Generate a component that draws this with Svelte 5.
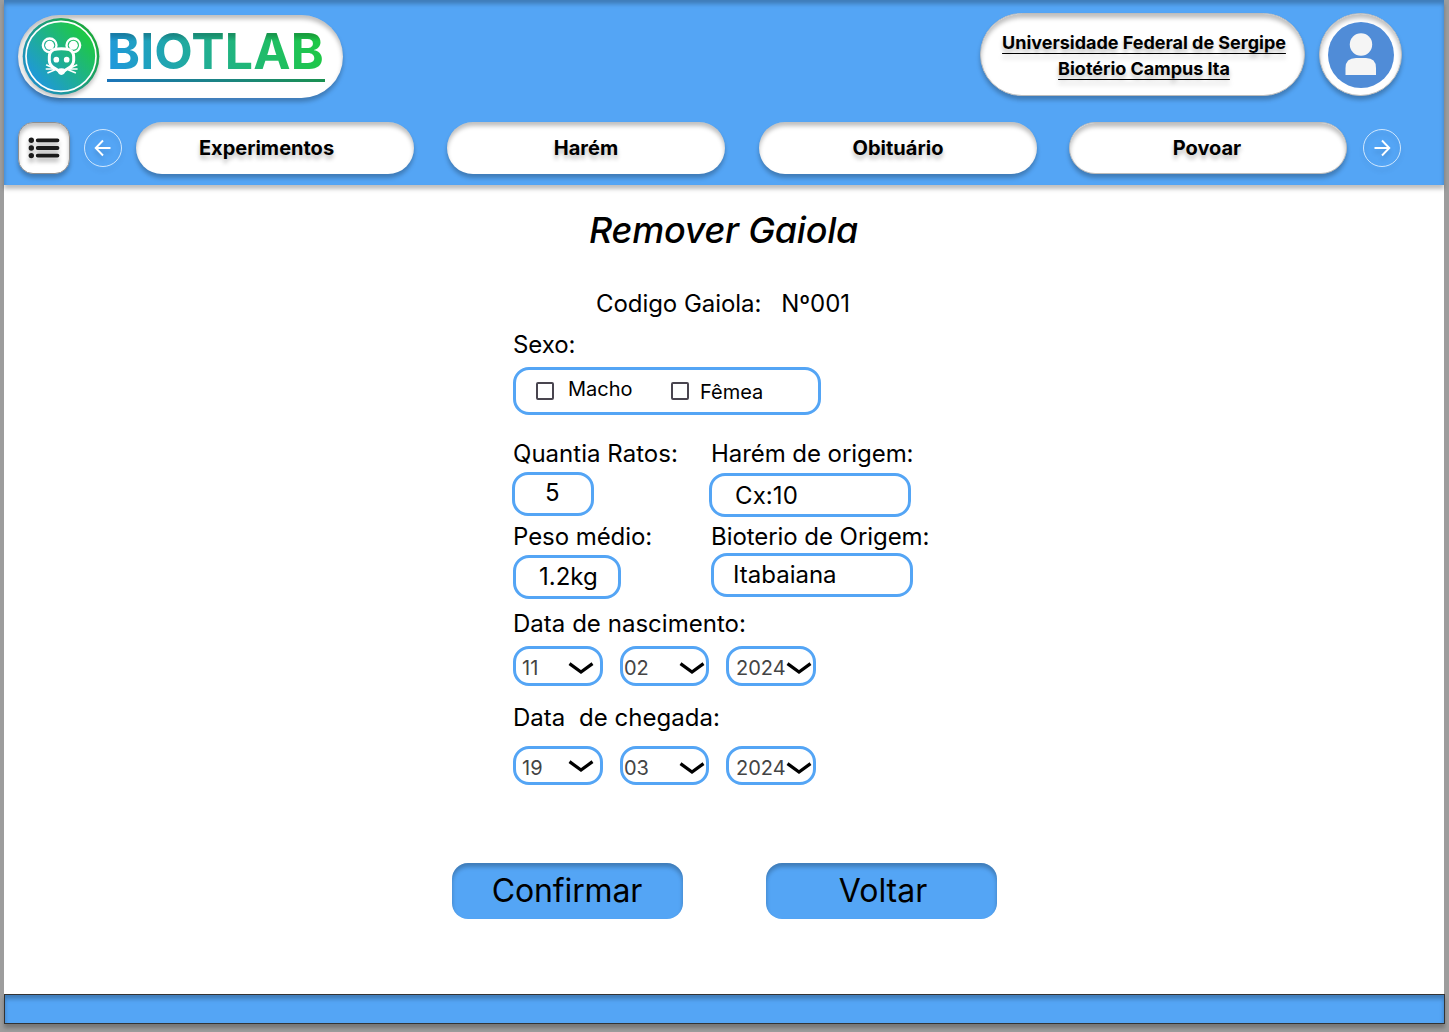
<script>
  const tabs = ['Experimentos', 'Harém', 'Obituário', 'Povoar'];
  const dates = [
    { key: 'birth', label: 'Data de nascimento:', parts: ['11', '02', '2024'] },
    { key: 'arrival', label: 'Data  de chegada:', parts: ['19', '03', '2024'] }
  ];
</script>

<div class="frame">
  <header>
    <div class="top">
      <div class="brand">
        <svg class="logo" width="78" height="78" viewBox="65 51 234 234">
          <defs>
            <linearGradient id="lg" gradientUnits="userSpaceOnUse" x1="100" y1="240" x2="255" y2="105">
              <stop offset="0" stop-color="#1f97dc" />
              <stop offset="1" stop-color="#1ec846" />
            </linearGradient>
            <linearGradient id="ring" x1="0" y1="0.8" x2="0.9" y2="0.2">
              <stop offset="0" stop-color="#1f8fd0" />
              <stop offset="1" stop-color="#1ba83c" />
            </linearGradient>
          </defs>
          <circle cx="182" cy="169" r="115" fill="url(#ring)" />
          <circle cx="182" cy="169" r="105" fill="url(#lg)" stroke="#fff" stroke-width="5" />
          <g fill="url(#lg)" stroke="#fff" stroke-width="7" stroke-linejoin="round">
            <circle cx="148" cy="136" r="20.500" />
            <circle cx="219" cy="136" r="20.500" />
            <path d="M160 149 Q183 143 207 149 Q220 155 220 170 V182 Q219 197 205 204 L192 212 H175 L162 204 Q148 197 147 182 V170 Q147 155 160 149Z" stroke-width="9" />
          </g>
          <path d="M139 195 L157 203 M138 207 L159 207 M143 218 L163 210 M229 195 L211 203 M230 207 L209 207 M225 218 L205 210" fill="none" stroke="#fff" stroke-width="5" stroke-linecap="round" />
          <g fill="#fff">
            <circle cx="148" cy="136" r="13.500" /><circle cx="219" cy="136" r="13.500" />
            <circle cx="168" cy="179" r="8.500" /><circle cx="199" cy="179" r="8.500" />
            <path d="M170 209 Q183 201 197 209 Q194 223 183 225 Q173 223 170 209Z" />
          </g>
        </svg>
        <span class="word">BIOTLAB</span>
      </div>
      <div class="account">
        <div class="campus"><span>Universidade Federal de Sergipe</span><span>Biotério Campus Ita</span></div>
        <div class="avatar">
          <svg width="66" height="66" viewBox="0 0 66 66">
            <circle cx="33" cy="33" r="33" fill="#508cd7" />
            <circle cx="33" cy="22.500" r="11.200" fill="#f5f5f5" />
            <path d="M17.500 53V46Q17.500 36 28 36H38Q48 36 48 46V53Z" fill="#f5f5f5" />
          </svg>
        </div>
      </div>
    </div>
    <nav>
      <button class="menu" aria-label="Menu">
        <svg width="32" height="22" viewBox="0 0 32 22">
          <g fill="#1a1a1a"><circle cx="3.300" cy="3.300" r="2.700" /><circle cx="3.300" cy="11" r="2.700" /><circle cx="3.300" cy="18.600" r="2.700" /></g>
          <path d="M9.700 3.300H29.500M9.700 11H29.500M9.700 18.600H29.500" stroke="#1a1a1a" stroke-width="3.800" stroke-linecap="round" />
        </svg>
      </button>
      <button class="arrow" aria-label="Anterior">
        <svg width="38" height="38" viewBox="0 0 38 38"><path d="M26.500 19H12M19 11.500L11.700 19L19 26.500" /></svg>
      </button>
      <div class="tabs">
        {#each tabs as tab}<button class="tab">{tab}</button>{/each}
      </div>
      <button class="arrow" aria-label="Próximo">
        <svg width="38" height="38" viewBox="0 0 38 38"><path d="M11.500 19H26M19 11.500L26.300 19L19 26.500" /></svg>
      </button>
    </nav>
  </header>

  <main>
    <h1>Remover Gaiola</h1>
    <p class="code">Codigo Gaiola:   Nº001</p>
    <div class="form">
      <span class="label sex-label">Sexo:</span>
      <div class="box sex">
        <i class="check"></i><span class="male">Macho</span>
        <i class="check second"></i><span class="female">Fêmea</span>
      </div>
      <div class="pair">
        <div class="left">
          <span class="label qty-label">Quantia Ratos:</span>
          <div class="box qty">5</div>
          <span class="label weight-label">Peso médio:</span>
          <div class="box weight">1.2kg</div>
        </div>
        <div class="right">
          <span class="label">Harém de origem:</span>
          <div class="box harem">Cx:10</div>
          <span class="label lab-label">Bioterio de Origem:</span>
          <div class="box lab">Itabaiana</div>
        </div>
      </div>
      {#each dates as d}
        <span class="label {d.key}-label">{d.label}</span>
        <div class="dates {d.key}">
          {#each d.parts as part}
            <div class="box select">
              <span>{part}</span>
              <svg width="26" height="14" viewBox="0 0 26 14"><path d="M1.500 2.600L13 11.100L24.500 2.600" /></svg>
            </div>
          {/each}
        </div>
      {/each}
    </div>
    <div class="actions"><button>Confirmar</button><button class="back">Voltar</button></div>
  </main>
  <footer></footer>
</div>

<style>
  :global(body) { background: #9d9d9d; }
  * { box-sizing: border-box; }
  button { font: inherit; color: inherit; border: 0; padding: 0; }
  .frame {
    width: 1441px; height: 1032px; margin-left: 4px;
    font-family: Inter, "Liberation Sans", sans-serif; color: #000;
    display: flex; flex-direction: column;
  }
  header {
    width: 1440px; height: 185px; flex: none; background: #54a5f5; z-index: 1;
    box-shadow: 0 4px 4px rgba(0,0,0,.25), inset 0 4px 4px rgba(0,0,0,.25);
    padding: 13px 42px 0 14px;
  }
  .top { height: 109px; display: flex; justify-content: space-between; align-items: flex-start; }
  .brand, .campus, .avatar, .menu, .tab {
    background: #fff;
    box-shadow: 0 4px 4px rgba(0,0,0,.25), inset 0 4px 4px rgba(0,0,0,.25);
  }
  .campus, .avatar, .tab:last-child { border: 1px solid #bcbcbc; }
  .brand { width: 325px; height: 83px; margin-top: 2px; border-radius: 42px; padding: 2px 0 0 4px; display: flex; align-items: flex-start; }
  .logo { flex: none; filter: drop-shadow(0 3px 2px rgba(0,0,0,.25)); }
  .word {
    margin: 4px 0 0 7px; height: 61px; width: 218px; padding-left: 0; white-space: nowrap;
    font-size: 50px; line-height: 60px; font-weight: 700; letter-spacing: .1px;
    background:
      linear-gradient(180deg, rgba(0,0,0,.2) 14px, rgba(0,0,0,0) 20px),
      linear-gradient(75deg, #1f97e0 0%, #21b189 50%, #1ec846 95%);
    -webkit-background-clip: text; background-clip: text; color: transparent;
    border-bottom: 3px solid #1a8b85;
    border-image: linear-gradient(90deg, #1b75bb, #1a9150) 1;
    border-image-width: 0 0 3px 0;
  }
  .account { display: flex; gap: 14px; }
  .campus {
    width: 325px; height: 83px; border-radius: 42px; padding: 16px 0 0 3px;
    display: flex; flex-direction: column; align-items: center;
    font-size: 18px; line-height: 26px; font-weight: 700; letter-spacing: -.02px; text-shadow: 0 4px 4px rgba(0,0,0,.25);
  }
  .campus span { text-decoration: underline; text-decoration-thickness: 1px; text-underline-offset: 4px; text-decoration-skip-ink: none; }
  .avatar { width: 83px; height: 83px; border-radius: 50%; padding: 7.500px 0 0 7.500px; }
  .avatar svg { display: block; }
  nav { display: flex; align-items: center; height: 52px; width: 1383px; }
  .menu { width: 52px; height: 52px; border-radius: 15px; display: grid; place-items: center; border: 1px solid #8f8f8f; }
  .menu svg { filter: drop-shadow(0 4px 2px rgba(0,0,0,.3)); }
  .arrow { width: 38px; height: 38px; margin: 0 0 0 14px; background: none; border-radius: 50%; border: 1px solid #cfe6fc; display: grid; place-items: center; filter: drop-shadow(0 4px 2px rgba(0,0,0,.12)); }
  .arrow svg { margin: -1px 0 0 -1px; width: 38px; height: 38px; }
  .arrow path { fill: none; stroke: #fff; stroke-width: 1.900; }
  .tabs { display: flex; gap: 33px; margin: 0 2px 0 14px; width: 1211px; }
  .tab { width: 278px; height: 52px; flex: none; border-radius: 26px; font-size: 20px; font-weight: 700; text-shadow: 0 4px 4px rgba(0,0,0,.25); }
  .tab:first-child { padding-right: 17px; }
  .tab:nth-child(3) { margin: 0 -1px 0 1px; }
  .tab:last-child { padding-right: 2px; }
  main { width: 1440px; height: 809px; flex: none; background: #fff; }
  h1 { margin: 0; padding: 20px 1px 0 0; text-align: center; font-size: 36px; line-height: 50px; font-weight: 500; font-style: italic; letter-spacing: -.25px; }
  .code { margin: 34px 2px 0 0; text-align: center; white-space: pre; font-size: 24px; line-height: 30px; letter-spacing: -.06px; }
  .form { margin-left: 509px; font-size: 24px; display: flex; flex-direction: column; align-items: flex-start; }
  .label { line-height: 30px; white-space: pre; display: block; letter-spacing: -.06px; }
  .qty-label, .birth-label, .arrival-label { letter-spacing: .03px; }
  .box { border: 3px solid #54a5f5; border-radius: 16px; background: #fff; display: flex; align-items: center; }
  .sex-label { margin-top: 11px; }
  .sex { width: 308px; height: 48px; margin-top: 7px; padding-left: 20px; font-size: 20px; }
  .check { width: 18px; height: 18px; border: 2px solid #49454f; border-radius: 2px; }
  .male { margin: -4px 0 0 14px; width: 64px; }
  .check.second { margin-left: 39px; }
  .female { margin: 2px 0 0 11px; }
  .pair { display: flex; margin-top: 24px; height: 170px; }
  .left { width: 198px; }
  .qty { width: 82px; height: 44px; margin: 3px 0 0 -1px; padding: 0 0 3px 30px; }
  .weight-label { margin-top: 6px; }
  .weight { width: 108px; height: 44px; margin-top: 3px; padding: 0 0 2px 23px; }
  .harem { width: 202px; height: 44px; margin: 4px 0 0 -2px; padding-left: 23px; letter-spacing: .1px; }
  .lab-label { margin-top: 5px; }
  .lab { width: 202px; height: 44px; margin-top: 1px; padding: 0 0 1px 19px; }
  .dates { display: grid; grid-template-columns: 90px 89px 90px; gap: 17px; }
  .birth { margin-top: 7px; }
  .arrival-label { margin-top: 17px; }
  .arrival { margin-top: 13px; }
  .select { height: 40px; font-size: 20px; color: #444; justify-content: space-between; padding: 3px 6px 0 6px; }
  .select:nth-child(2) { padding: 3px 1px 0 1px; }
  .select:nth-child(3) { padding: 3px 2px 0 7px; }
  .arrival .select { height: 39px; padding-top: 4px; }
  .arrival .select:first-child svg { margin-top: -4px; }
  .select svg { flex: none; }
  .select path { fill: none; stroke: #000; stroke-width: 3.200; }
  .actions { display: flex; gap: 83px; margin: 78px 0 0 448px; }
  .actions button { width: 231px; height: 56px; padding: 0 1px 2px 0; border-radius: 16px; background: #54a5f5; font-size: 32px; letter-spacing: -.15px; box-shadow: inset 0 4px 4px rgba(0,0,0,.25); }
  .actions .back { padding: 0 0 2px 3px; letter-spacing: 0; }
  footer { height: 30px; flex: none; background: #54a5f5; border: 1px solid #333; box-shadow: 0 4px 4px rgba(0,0,0,.25), inset 0 4px 4px rgba(0,0,0,.25); }
</style>
